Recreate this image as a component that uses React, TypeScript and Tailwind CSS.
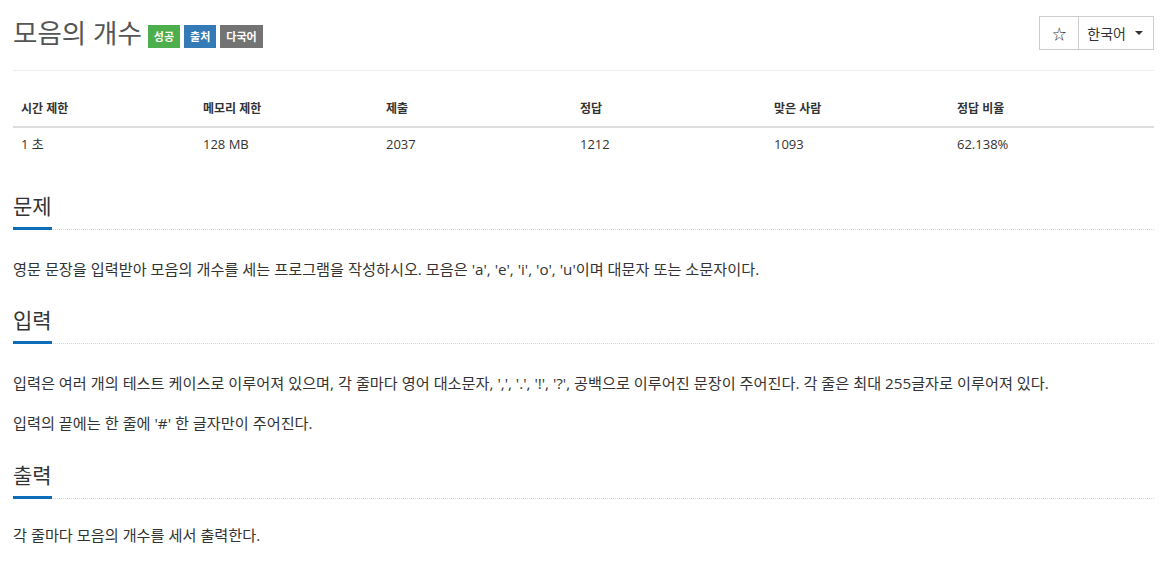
import React from "react";

const FONT = { fontFamily: '"Open Sans", "Noto Sans CJK KR", sans-serif' };

const STATS = [
  ["시간 제한", "1 초"],
  ["메모리 제한", "128 MB"],
  ["제출", "2037"],
  ["정답", "1212"],
  ["맞은 사람", "1093"],
  ["정답 비율", "62.138%"],
];

function Headline({ title }: { title: string }) {
  return (
    <div className="flex border-b border-dotted border-[#c6daee]">
      <h2 className="-mb-px border-b-[3px] border-[#0e6db8] pb-[8px] text-[21px] leading-[26px] font-normal text-[#333]">
        {title}
      </h2>
    </div>
  );
}

export default function App() {
  return (
    <div className="min-h-screen bg-white px-[13px] text-[#333]" style={FONT}>
      <div className="flex items-center justify-between border-b border-[#eee] pt-[16px] pb-[20px]">
        <div className="flex items-center gap-[6px]">
          <h1 className="text-[26.5px] leading-[34px] font-normal text-[#555]">모음의 개수</h1>
          <div className="mt-[6px] flex gap-[4px] text-[11px] font-bold leading-[23px] text-white">
            <span className="bg-[#4cae4c] px-[6px]">성공</span>
            <span className="bg-[#337ab7] px-[6px]">출처</span>
            <span className="bg-[#737373] px-[6px]">다국어</span>
          </div>
        </div>
        <div className="flex h-[34px] border border-[#ccc] text-[14px] text-[#333]">
          <button className="w-[39px] border-r border-[#ccc] text-[14px]">☆</button>
          <button className="flex items-center gap-[9px] pl-[8px] pr-[10px]">
            한국어
            <span className="h-0 w-0 border-x-[4px] border-t-[4px] border-x-transparent border-t-[#333]" />
          </button>
        </div>
      </div>

      <div className="mt-[19px] grid grid-cols-[182px_183px_194px_194px_183px_1fr]">
        {STATS.map(([h]) => (
          <div key={h} className="border-b-2 border-[#ddd] px-[8px] pt-[9px] pb-[8px] text-[12px] font-bold leading-[19px]">
            {h}
          </div>
        ))}
        {STATS.map(([h, v]) => (
          <div key={h} className="px-[8px] py-[7px] text-[13px] leading-[18px]">
            {v}
          </div>
        ))}
      </div>

      <div className="mt-[33px]">
        <Headline title="문제" />
        <p className="mt-[28px] text-[15.2px] leading-[22px]">
          영문 문장을 입력받아 모음의 개수를 세는 프로그램을 작성하시오. 모음은 'a', 'e', 'i', 'o', 'u'이며 대문자 또는 소문자이다.
        </p>
      </div>

      <div className="mt-[27px]">
        <Headline title="입력" />
        <p className="mt-[28px] text-[15.2px] leading-[22px]">
          입력은 여러 개의 테스트 케이스로 이루어져 있으며, 각 줄마다 영어 대소문자, ',', '.', '!', '?', 공백으로 이루어진 문장이 주어진다. 각 줄은 최대 255글자로 이루어져 있다.
        </p>
        <p className="mt-[18px] text-[15.2px] leading-[22px]">입력의 끝에는 한 줄에 '#' 한 글자만이 주어진다.</p>
      </div>

      <div className="mt-[28px]">
        <Headline title="출력" />
        <p className="mt-[25px] text-[15.2px] leading-[22px]">각 줄마다 모음의 개수를 세서 출력한다.</p>
      </div>
    </div>
  );
}
